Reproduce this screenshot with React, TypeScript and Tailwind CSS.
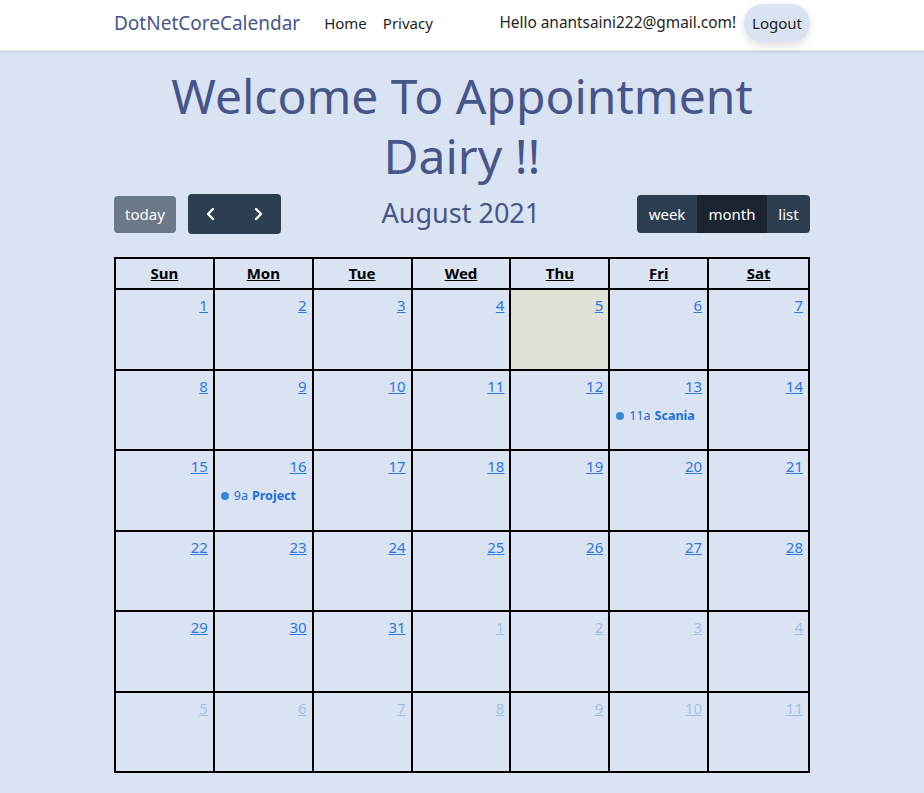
import React from "react";

const font = { fontFamily: '"Noto Sans", "Open Sans", sans-serif' };

type Cell = { d: number; other?: boolean; today?: boolean; ev?: { t: string; n: string } };

const weeks: Cell[][] = [
  [1, 2, 3, 4, 5, 6, 7].map((d) => ({ d, today: d === 5 })),
  [8, 9, 10, 11, 12, 13, 14].map((d) => ({ d, ev: d === 13 ? { t: "11a", n: "Scania" } : undefined })),
  [15, 16, 17, 18, 19, 20, 21].map((d) => ({ d, ev: d === 16 ? { t: "9a", n: "Project" } : undefined })),
  [22, 23, 24, 25, 26, 27, 28].map((d) => ({ d })),
  [
    { d: 29 },
    { d: 30 },
    { d: 31 },
    { d: 1, other: true },
    { d: 2, other: true },
    { d: 3, other: true },
    { d: 4, other: true },
  ],
  [5, 6, 7, 8, 9, 10, 11].map((d) => ({ d, other: true })),
];

const days = ["Sun", "Mon", "Tue", "Wed", "Thu", "Fri", "Sat"];

export default function App() {
  return (
    <div className="min-h-[793px] bg-[#dae3f1]" style={font}>
      <nav className="h-[51px] bg-white shadow-[0_1px_3px_rgba(0,0,0,0.1)] border-b border-[#e5e5e5]">
        <div className="w-[696px] mx-auto h-full flex items-center pb-[4px]">
          <span className="text-[19px] text-[#47568a] mr-[24px]">DotNetCoreCalendar</span>
          <span className="text-[15px] text-[#222] mr-[16px]">Home</span>
          <span className="text-[15px] text-[#222]">Privacy</span>
          <div className="ml-auto flex items-center">
            <span className="text-[15.4px] text-[#222] mr-[8px]">Hello anantsaini222@gmail.com!</span>
            <span className="h-[38px] px-[8px] flex items-center rounded-full bg-[#dae3f1] text-[15px] text-[#222] shadow-[0_4px_8px_rgba(0,0,0,0.12)]">
              Logout
            </span>
          </div>
        </div>
      </nav>
      <div className="w-[696px] mx-auto">
        <h1 className="text-center text-[48px] leading-[60px] text-[#47568a] font-normal pt-[15px] px-[40px]">
          Welcome To Appointment Dairy !!
        </h1>
        <div className="flex items-center mt-[8px] h-[40px]">
          <div className="flex items-center gap-[12px]">
            <span className="h-[37px] px-[11px] flex items-center rounded-[4px] bg-[#6b7888] text-white text-[15px]">today</span>
            <div className="h-[40px] w-[93px] flex rounded-[4px] bg-[#2c3e50] text-white">
              <span className="flex-1 flex items-center justify-center">
                <svg width="14" height="14" viewBox="0 0 14 14" fill="none" stroke="white" strokeWidth="2.4" strokeLinecap="round" strokeLinejoin="round">
                  <path d="M9 2L4 7l5 5" />
                </svg>
              </span>
              <span className="flex-1 flex items-center justify-center">
                <svg width="14" height="14" viewBox="0 0 14 14" fill="none" stroke="white" strokeWidth="2.4" strokeLinecap="round" strokeLinejoin="round">
                  <path d="M5 2l5 5-5 5" />
                </svg>
              </span>
            </div>
          </div>
          <div className="flex-1 text-center text-[27px] text-[#47568a] pl-[4px] pb-[2px]">August 2021</div>
          <div className="h-[38px] flex rounded-[4px] overflow-hidden bg-[#2c3e50] text-white text-[15px]">
            <span className="w-[60px] flex items-center justify-center">week</span>
            <span className="w-[70px] flex items-center justify-center bg-[#1a252f]">month</span>
            <span className="w-[43px] flex items-center justify-center">list</span>
          </div>
        </div>
        <div className="mt-[23px] border-2 border-black">
          <div className="grid grid-cols-7 h-[29px]">
            {days.map((d, i) => (
              <div
                key={d}
                className={`flex items-center justify-center text-[15px] font-bold text-black underline ${i < 6 ? "border-r-2 border-black" : ""}`}
              >
                {d}
              </div>
            ))}
          </div>
          {weeks.map((w, wi) => (
            <div key={wi} className="grid grid-cols-7 h-[80.5px] border-t-2 border-black">
              {w.map((c, i) => (
                <div
                  key={i}
                  className={`${i < 6 ? "border-r-2 border-black" : ""} ${c.today ? "bg-[#e0e2d5]" : ""} flex flex-col`}
                >
                  <div
                    className={`text-right pr-[5px] pt-[4px] text-[15px] leading-[22px] underline ${
                      c.other ? "text-[#2a7ae2]/35" : "text-[#2a7ae2]"
                    }`}
                  >
                    {c.d}
                  </div>
                  {c.ev && (
                    <div className="flex items-center pl-[6px] mt-[10px] text-[12.5px] text-[#1a6fd6]">
                      <span className="w-[8px] h-[8px] rounded-full bg-[#3788d8] mr-[5px]" />
                      <span>{c.ev.t}</span>
                      <span className="font-bold ml-[4px]">{c.ev.n}</span>
                    </div>
                  )}
                </div>
              ))}
            </div>
          ))}
        </div>
      </div>
    </div>
  );
}
